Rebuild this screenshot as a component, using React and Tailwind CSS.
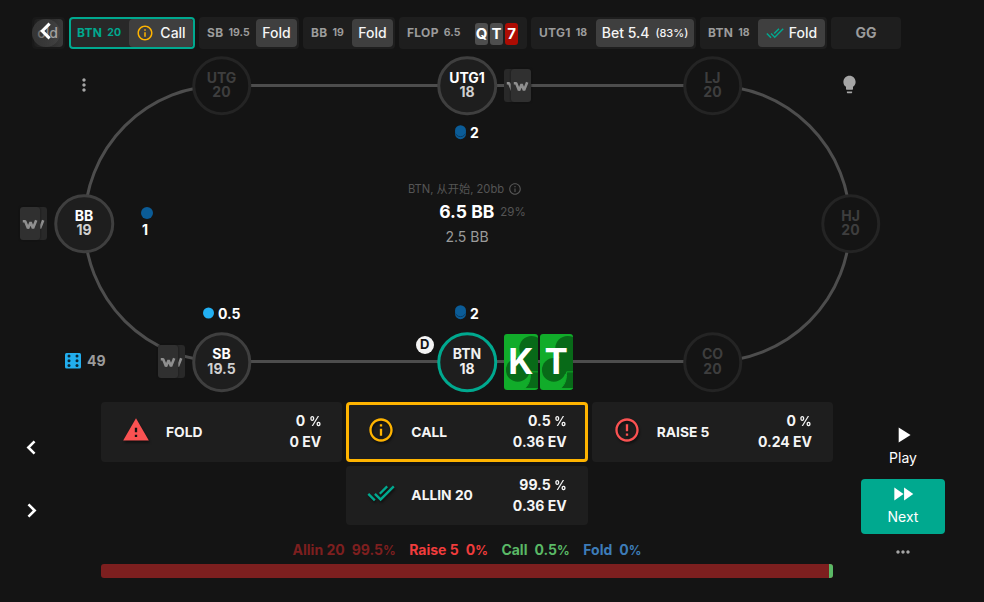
import React from "react";
import {
  MdInfoOutline,
  MdDoneAll,
  MdWarning,
  MdErrorOutline,
  MdPlayArrow,
  MdFastForward,
  MdMoreHoriz,
  MdMoreVert,
  MdLightbulb,
} from "react-icons/md";

function Chevron({ right, className }) {
  return (
    <svg viewBox="0 0 24 24" className={className} fill="none" stroke="#fff" strokeWidth="2.3">
      <path d={right ? "M9.3 6.5l5.5 5.5-5.5 5.5" : "M14.7 6.5L9.2 12l5.5 5.5"} />
    </svg>
  );
}

function Step({ width, pos, stack, active, children }) {
  return (
    <div
      style={{ width }}
      className={`flex h-8 shrink-0 items-center justify-between whitespace-nowrap rounded-[4px] ${
        active ? "border-2 border-[#00a98f] bg-[#282828] pl-[6px]" : "bg-[#1e1e1e] pl-2 pr-[2px]"
      }`}
    >
      <div className={`flex items-center gap-[5px] font-bold ${active ? "text-[#00a98f]" : "text-[#9b9b9b]"}`}>
        <span className="text-[12px] tracking-[0.3px]">{pos}</span>
        <span className="mb-px text-[10.5px]">{stack}</span>
      </div>
      {children}
    </div>
  );
}

function Action({ width, children }) {
  return (
    <div
      style={{ width }}
      className="flex h-7 items-center justify-center rounded-[4px] bg-[#3f3f3f] text-[14px] font-medium leading-5 pb-px text-[#f5f5f5]"
    >
      {children}
    </div>
  );
}

function MiniCard({ rank, red }) {
  return (
    <div
      className={`flex h-[22px] w-[13px] items-center justify-center rounded-[3px] text-[15px] font-bold text-white ${
        red ? "bg-[#ad0c03]" : "bg-[#4e4e4e]"
      }`}
    >
      {rank}
    </div>
  );
}

function Seat({ x, y, name, stack, tone = "live" }) {
  const tones = {
    live: "border-[#3f3f3f] bg-[#1e1e1e] text-white",
    folded: "border-[#242424] bg-[#141414] text-[#3e3e3e]",
    hero: "border-[#00a98f] bg-[#1e1e1e] text-[#f0f0f0]",
  };
  return (
    <div
      style={{ left: x, top: y }}
      className={`absolute flex size-[59.5px] -translate-x-1/2 -translate-y-1/2 flex-col items-center justify-center rounded-full border-[3px] text-[14px] font-bold leading-[14.4px] ${tones[tone]}`}
    >
      <span>{name}</span>
      <span className={tone === "live" ? "text-[#d0d0d0]" : ""}>{stack}</span>
    </div>
  );
}

function Logo({ className }) {
  return (
    <svg viewBox="0 0 16 12" className={className} fill="none" stroke="#8f8f8f" strokeWidth="2.6">
      <path d="M0.8 2.2h2.4l2.8 7.2 2.6-6.2 2.4 6.2L14.2 1.2" strokeLinejoin="bevel" />
    </svg>
  );
}

function HiddenCards({ x, y, frontLeft }) {
  return (
    <div style={{ left: x, top: y }} className="absolute h-[33px] w-[27px]">
      <div
        className={`absolute top-0 flex h-[33px] w-5 items-center overflow-hidden rounded-[3px] bg-[#292929] ${
          frontLeft ? "right-0" : "left-0"
        }`}
      >
        <Logo className="ml-[2px] w-4 shrink-0 translate-y-px" />
      </div>
      <div
        className={`absolute top-0 flex h-[33px] w-5 items-center justify-center rounded-[3px] bg-[#303030] shadow-[0_0_2px_#101010] ${
          frontLeft ? "left-0" : "right-0"
        }`}
      >
        <Logo className="w-4 translate-y-px" />
      </div>
    </div>
  );
}

function HoleCard({ rank }) {
  return (
    <div className="relative h-14 w-[33.5px] overflow-hidden rounded-[3px] bg-[#11ac2a]">
      <svg viewBox="0 0 34 56" className="absolute inset-0 size-full" fill="#086a18">
        <circle cx="28" cy="14" r="12.5" />
        <circle cx="14" cy="36" r="12" />
        <circle cx="42" cy="36" r="12" />
        <path d="M19 24h18v16H21z" />
        <path d="M27 38c0 7-1 12-6 17h15V38z" stroke="#11ac2a" strokeWidth="1" />
      </svg>
      <span className="absolute inset-0 flex items-center justify-center pb-px text-[35px] font-bold leading-none text-white">
        {rank}
      </span>
    </div>
  );
}

function Bet({ x, y, amount, color = "#0b5c97", stacked }) {
  return (
    <div style={{ left: x, top: y }} className="absolute flex h-[18px] items-center gap-1 text-[14px] font-bold text-white">
      <svg width="11" height="15" viewBox="0 0 11 15">
        {stacked && <circle cx="5.5" cy="8.7" r="5.5" fill={color} />}
        {stacked && <path d="M0.6 8.6a5.5 5.5 0 0 0 9.8 0" fill="none" stroke="#0a3557" strokeWidth="1" />}
        <circle cx="5.5" cy={stacked ? 5.7 : 7} r="5.5" fill={color} />
      </svg>
      <span className={stacked ? "pt-px" : ""}>{amount}</span>
    </div>
  );
}

function Choice({ icon, name, pct, ev, selected }) {
  return (
    <div
      className={`flex items-center rounded-[4px] bg-[#1e1e1e] text-[14px] font-bold text-[#f5f5f5] ${
        selected ? "border-[3px] border-[#ffb400] pl-[18px] pr-[18px]" : "pl-[21px] pr-[21px]"
      }`}
    >
      <div className="mb-[5px] flex w-7 justify-center drop-shadow-[1px_2px_1px_rgba(0,0,0,0.5)]">{icon}</div>
      <span className="ml-4 text-[13.8px]">{name}</span>
      <div className="mb-[2px] ml-auto text-right leading-[21px]">
        <div className="h-[21px]">
          {pct} <span className="-ml-px inline-block origin-right scale-x-90 text-[13.5px] leading-none">%</span>
        </div>
        <div className="h-[21px]">{ev} EV</div>
      </div>
    </div>
  );
}

function Frequency({ color, name, value }) {
  return (
    <div style={{ color }} className="flex gap-[7px]">
      <span>{name}</span>
      <span>
        {value}
        <span className="text-[12.5px]">%</span>
      </span>
    </div>
  );
}

function Dice() {
  return (
    <svg width="16" height="16" viewBox="0 0 16 16">
      <rect width="16" height="15.5" rx="1.5" fill="#22aeee" />
      <g fill="#0c2634">
        {[3, 7.8, 12.5].map((y) => (
          <g key={y}>
            <circle cx="4" cy={y} r="1.5" />
            <circle cx="12" cy={y} r="1.5" />
          </g>
        ))}
      </g>
    </svg>
  );
}

export default function App() {
  return (
    <div className="flex h-[602px] w-[984px] flex-col overflow-hidden bg-[#141414] font-['Inter','Noto_Sans_CJK_SC',sans-serif] text-white">
      <header className="flex h-[49px] shrink-0 items-end gap-1 pl-8">
        <div className="relative flex h-8 w-[33px] shrink-0 items-center justify-end overflow-hidden rounded-[4px] bg-[#191919] pr-[2px]">
          <div className="flex h-7 w-[29px] items-center justify-end rounded-[4px] bg-gradient-to-r from-[#1e1e1e] to-[#3a3a3a] pb-px pr-[5px] text-[14px] font-medium text-[#d4d4d4]">
            old
          </div>
          <div className="absolute left-0 top-[2px] flex size-7 items-center justify-center rounded-full bg-gradient-to-r from-[#3c3c3c]/80 to-[#606060]/30">
            <Chevron className="size-[32px] shrink-0 -translate-y-[2px]" />
          </div>
        </div>
        <Step width={126} pos="BTN" stack="20" active>
          <Action width={64}>
            <MdInfoOutline className="mr-[6px] size-[18px] text-[#ffb400]" />
            Call
          </Action>
        </Step>
        <Step width={100} pos="SB" stack="19.5">
          <Action width={41}>Fold</Action>
        </Step>
        <Step width={92} pos="BB" stack="19">
          <Action width={41}>Fold</Action>
        </Step>
        <Step width={128} pos="FLOP" stack="6.5">
          <div className="mr-[7px] mt-[2px] flex gap-[2px]">
            <MiniCard rank="Q" />
            <MiniCard rank="T" />
            <MiniCard rank="7" red />
          </div>
        </Step>
        <Step width={165} pos="UTG1" stack="18">
          <Action width={98}>
            Bet 5.4<span className="ml-[6px] text-[11px]">(83%)</span>
          </Action>
        </Step>
        <Step width={127} pos="BTN" stack="18">
          <Action width={67}>
            <MdDoneAll className="mr-[5px] size-[18px] text-[#00a98f]" />
            Fold
          </Action>
        </Step>
        <div className="flex h-8 w-[70px] items-center justify-center rounded-[4px] bg-[#1e1e1e] pb-px text-[14px] font-bold text-[#9b9b9b]">
          GG
        </div>
      </header>

      {/* Poker table: seats, cards and chips placed around the track */}
      <main className="relative h-[353px] shrink-0">
        <svg className="absolute inset-0" width="984" height="353" fill="none">
          <rect x="84.5" y="36.5" width="765.5" height="276" rx="138" stroke="#4d4d4d" strokeWidth="3" />
        </svg>
        <MdMoreVert className="absolute left-[74px] top-[25.5px] size-5 text-[#a5a5a5]" />
        <MdLightbulb className="absolute left-[839px] top-[25px] size-[21px] text-[#a5a5a5]" />

        <Seat x={221.5} y={36.5} name="UTG" stack="20" tone="folded" />
        <Seat x={467} y={36.5} name="UTG1" stack="18" />
        <Seat x={712.5} y={36.5} name="LJ" stack="20" tone="folded" />
        <Seat x={84} y={174.5} name="BB" stack="19" />
        <Seat x={850.5} y={174.5} name="HJ" stack="20" tone="folded" />
        <Seat x={221.5} y={313} name="SB" stack="19.5" />
        <Seat x={467} y={313} name="BTN" stack="18" tone="hero" />
        <Seat x={712.5} y={313} name="CO" stack="20" tone="folded" />

        <HiddenCards x={504} y={20} />
        <HiddenCards x={20} y={158} frontLeft />
        <HiddenCards x={158} y={296} frontLeft />
        <div className="absolute left-[504px] top-[285px] flex gap-[2px]">
          <HoleCard rank="K" />
          <HoleCard rank="T" />
        </div>

        <Bet x={455} y={74} amount="2" stacked />
        <Bet x={455} y={254.5} amount="2" stacked />
        <Bet x={203} y={255.5} amount="0.5" color="#22b0f3" />
        <div className="absolute left-[141px] top-[158px] flex w-3 flex-col items-center">
          <div className="size-3 shrink-0 rounded-full bg-[#0b5c97]" />
          <span className="-ml-1 mt-[3px] text-[14px] font-bold leading-4">1</span>
        </div>
        <div className="absolute left-[416px] top-[287px] flex size-[17.5px] items-center justify-center rounded-full bg-[#f4f4f4] text-[13px] font-bold text-[#141414]">
          D
        </div>

        <div className="absolute left-[367px] top-[131px] flex w-[200px] flex-col items-center whitespace-nowrap">
          <div className="mr-[4px] flex h-[17px] items-center gap-1 text-[11.2px] text-[#555]">
            <span className="pt-px">BTN, 从开始, 20bb</span>
            <MdInfoOutline className="size-[14px]" />
          </div>
          <div className="ml-[31px] mt-[4px] flex h-[23px] items-center gap-[6px]">
            <span className="text-[17.5px] font-bold">6.5 BB</span>
            <span className="text-[11.5px] text-[#555]">29%</span>
          </div>
          <div className="mt-[3px] h-5 text-[14px] leading-5 text-[#9b9b9b]">2.5 BB</div>
        </div>

        <div className="absolute left-[65px] top-[301px] flex items-center gap-[6px] text-[14px] font-bold text-[#9b9b9b]">
          <Dice />
          49
        </div>
      </main>

      <footer className="flex flex-1">
        <nav className="flex w-[101px] flex-col items-start gap-[36px] pl-[18px] pt-[32px]">
          <Chevron className="size-[27px]" />
          <Chevron right className="size-[27px]" />
        </nav>
        <section className="w-[732px]">
          <div className="grid grid-cols-3 grid-rows-[60px_59px] gap-1">
            <Choice icon={<MdWarning className="size-7 text-[#fa5252]" />} name="FOLD" pct="0" ev="0" />
            <Choice
              icon={<MdInfoOutline className="size-7 text-[#ffb400]" />}
              name="CALL"
              pct="0.5"
              ev="0.36"
              selected
            />
            <Choice icon={<MdErrorOutline className="size-7 text-[#fa5252]" />} name="RAISE 5" pct="0" ev="0.24" />
            <div />
            <Choice icon={<MdDoneAll className="size-7 text-[#00a98f]" />} name="ALLIN 20" pct="99.5" ev="0.36" />
          </div>
          <div className="mt-[15px] flex h-5 items-center justify-center gap-[13.5px] text-[14px] font-bold">
            <Frequency color="#7d1f1f" name="Allin 20" value="99.5" />
            <Frequency color="#f03c3c" name="Raise 5" value="0" />
            <Frequency color="#5ab966" name="Call" value="0.5" />
            <Frequency color="#3d7cb8" name="Fold" value="0" />
          </div>
          <div className="mt-1 flex h-[14px] overflow-hidden rounded-[3px] bg-[#7d1f1f]">
            <div className="ml-auto w-1 bg-[#5ab966]" />
          </div>
        </section>
        <aside className="ml-7 flex w-[84px] flex-col items-center text-[14px]">
          <MdPlayArrow className="mt-[20px] size-[26px]" />
          <span className="leading-5">Play</span>
          <button className="mt-[11px] flex h-[55px] w-[84px] shrink-0 flex-col items-center rounded-[4px] bg-[#00a98f] pt-[2px]">
            <MdFastForward className="size-[26px] shrink-0" />
            <span className="leading-5">Next</span>
          </button>
          <MdMoreHoriz className="mt-[8px] size-5 text-[#a5a5a5]" />
        </aside>
      </footer>
    </div>
  );
}
